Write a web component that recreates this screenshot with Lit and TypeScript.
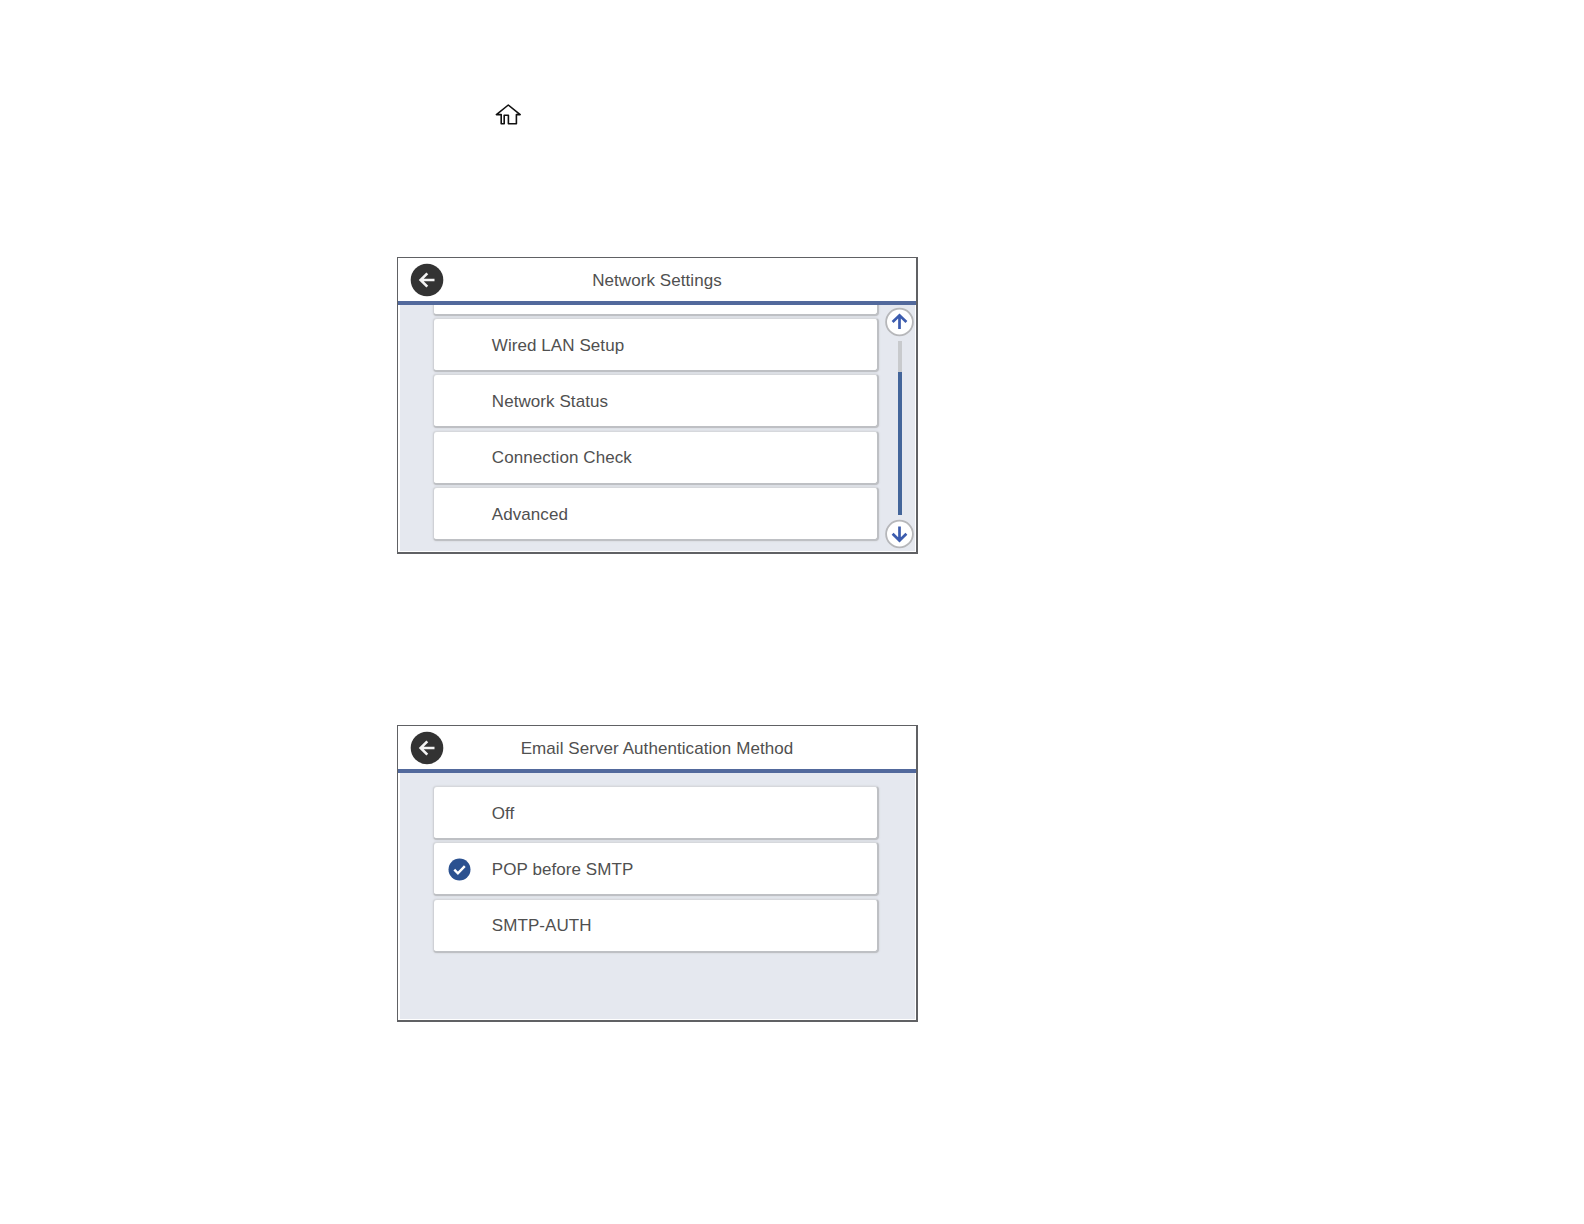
import { LitElement, html, css, svg, nothing } from 'lit';
import { customElement, property } from 'lit/decorators.js';

/**
 * Framed printer LCD with a title bar, a list of rows and an optional scroll bar
 * @element lcd-panel
 */
@customElement('lcd-panel')
export class LcdPanel extends LitElement {
  static override styles = css`
    :host {
      display: flex;
      flex-direction: column;
      box-sizing: border-box;
      width: 521px;
      height: 297px;
      border: solid #606164;
      border-width: 1px 2px 2px 1px;
      background: #fff;
      color: #505050;
      font: 17px/20px 'Liberation Sans', Arial, sans-serif;
      letter-spacing: 0.07px;
    }

    .header {
      display: grid;
      grid-template-columns: 58px 1fr 58px;
      align-items: center;
      box-sizing: border-box;
      flex: none;
      height: 47px;
      border-bottom: 4px solid #52699c;
    }

    .back {
      display: block;
      margin: 1px 0 0 11.7px;
    }

    .title {
      margin-top: 2px;
      text-align: center;
      white-space: nowrap;
    }

    .body {
      display: flex;
      flex: 1;
      min-height: 0;
      margin: 0 1px 1px 2px;
      overflow: hidden;
      background: #e5e8ef;
    }

    .rows {
      display: flex;
      flex-direction: column;
      flex: none;
      gap: 2.4px;
      width: 446px;
      margin: 13px 0 0 32.5px;
    }

    :host([scrolled]) .rows {
      margin-top: -43.4px;
    }

    .row {
      display: flex;
      align-items: center;
      box-sizing: border-box;
      flex: none;
      height: 54px;
      padding-top: 2px;
      border: solid #bec0c4;
      border-width: 1px 2px 2px 1px;
      border-top-color: #d6d8dc;
      border-left-color: #cfd1d6;
      border-radius: 4px;
      background: #fff;
      box-shadow: 0 0 2px #c8cacf;
    }

    .mark {
      display: flex;
      flex: none;
      width: 44.3px;
      padding-left: 14px;
    }

    .scroll {
      display: flex;
      flex-direction: column;
      align-items: center;
      flex: none;
      width: 29px;
      margin-left: 6px;
      padding: 1.5px 0 2px;
    }

    .scroll svg {
      flex: none;
    }

    .track {
      flex: 1;
      width: 4px;
      margin: 4px 0 4px 1px;
      background: linear-gradient(#c8cacd 31px, #43659a 31px);
    }
  `;

  @property({ type: String })
  heading = '';

  @property({ type: Array })
  rows: string[] = [];

  @property({ type: Number })
  selected = -1;

  @property({ type: Boolean, reflect: true })
  scrolled = false;

  private check() {
    return html`
      <svg width="23" height="23" viewBox="0 0 23 23" fill="none">
        <circle cx="11.5" cy="11.5" r="11" fill="#2b5190" />
        <path d="M6.3 11.6l3.6 3.7 6.9-7.2" stroke="#fff" stroke-width="2.4" />
      </svg>
    `;
  }

  private arrow(up: boolean) {
    const d = up
      ? 'M14.5 22V8.5M7.6 15l6.9-6.7 6.9 6.7'
      : 'M14.5 7.5V21M7.6 14.8l6.9 6.7 6.9-6.7';
    return html`
      <svg width="29" height="30" viewBox="0 0 29 30" fill="none">
        <circle cx="14.5" cy="15" r="13.4" fill="#fff" stroke="#b6b7ba" stroke-width="1.8" />
        ${svg`<path d=${d} stroke="#3c5cae" stroke-width="2.7" />`}
      </svg>
    `;
  }

  override render() {
    return html`
      <div class="header">
        <svg class="back" width="34" height="34" viewBox="0 0 34 34" fill="none">
          <circle cx="17" cy="17" r="16.3" fill="#333" />
          <path d="M24.5 17H11M17.3 10.3L10.6 17l6.7 6.7" stroke="#f4f4f4" stroke-width="2.6" />
        </svg>
        <div class="title">${this.heading}</div>
      </div>
      <div class="body">
        <div class="rows">
          ${this.rows.map(
            (label, i) => html`
              <div class="row">
                <span class="mark">${i === this.selected ? this.check() : nothing}</span>
                <span>${label}</span>
              </div>
            `
          )}
        </div>
        ${this.scrolled
          ? html`
              <div class="scroll">
                ${this.arrow(true)}
                <div class="track"></div>
                ${this.arrow(false)}
              </div>
            `
          : nothing}
      </div>
    `;
  }
}

@customElement('app-root')
export class AppRoot extends LitElement {
  static override styles = css`
    :host {
      display: flex;
      flex-direction: column;
      box-sizing: border-box;
      height: 1224px;
      padding: 102px 0 0 397px;
      background: #fff;
    }

    .home {
      flex: none;
      margin: 0 0 130px 96px;
    }

    .second {
      margin-top: 171px;
    }
  `;

  // The leading blank entry is the row scrolled mostly out of view.
  private network = ['', 'Wired LAN Setup', 'Network Status', 'Connection Check', 'Advanced'];

  private auth = ['Off', 'POP before SMTP', 'SMTP-AUTH'];

  override render() {
    return html`
      <svg class="home" width="30" height="25" viewBox="0 0 30 25" fill="none">
        <path
          d="M15.3 3L3.4 12.6h4.8v9.1h3v-8.4h4.2v8.4h8v-9.1h3.8z"
          stroke="#111"
          stroke-width="1.6"
          stroke-linejoin="round"
        />
      </svg>
      <lcd-panel heading="Network Settings" .rows=${this.network} scrolled></lcd-panel>
      <lcd-panel
        class="second"
        heading="Email Server Authentication Method"
        .rows=${this.auth}
        .selected=${1}
      ></lcd-panel>
    `;
  }
}
